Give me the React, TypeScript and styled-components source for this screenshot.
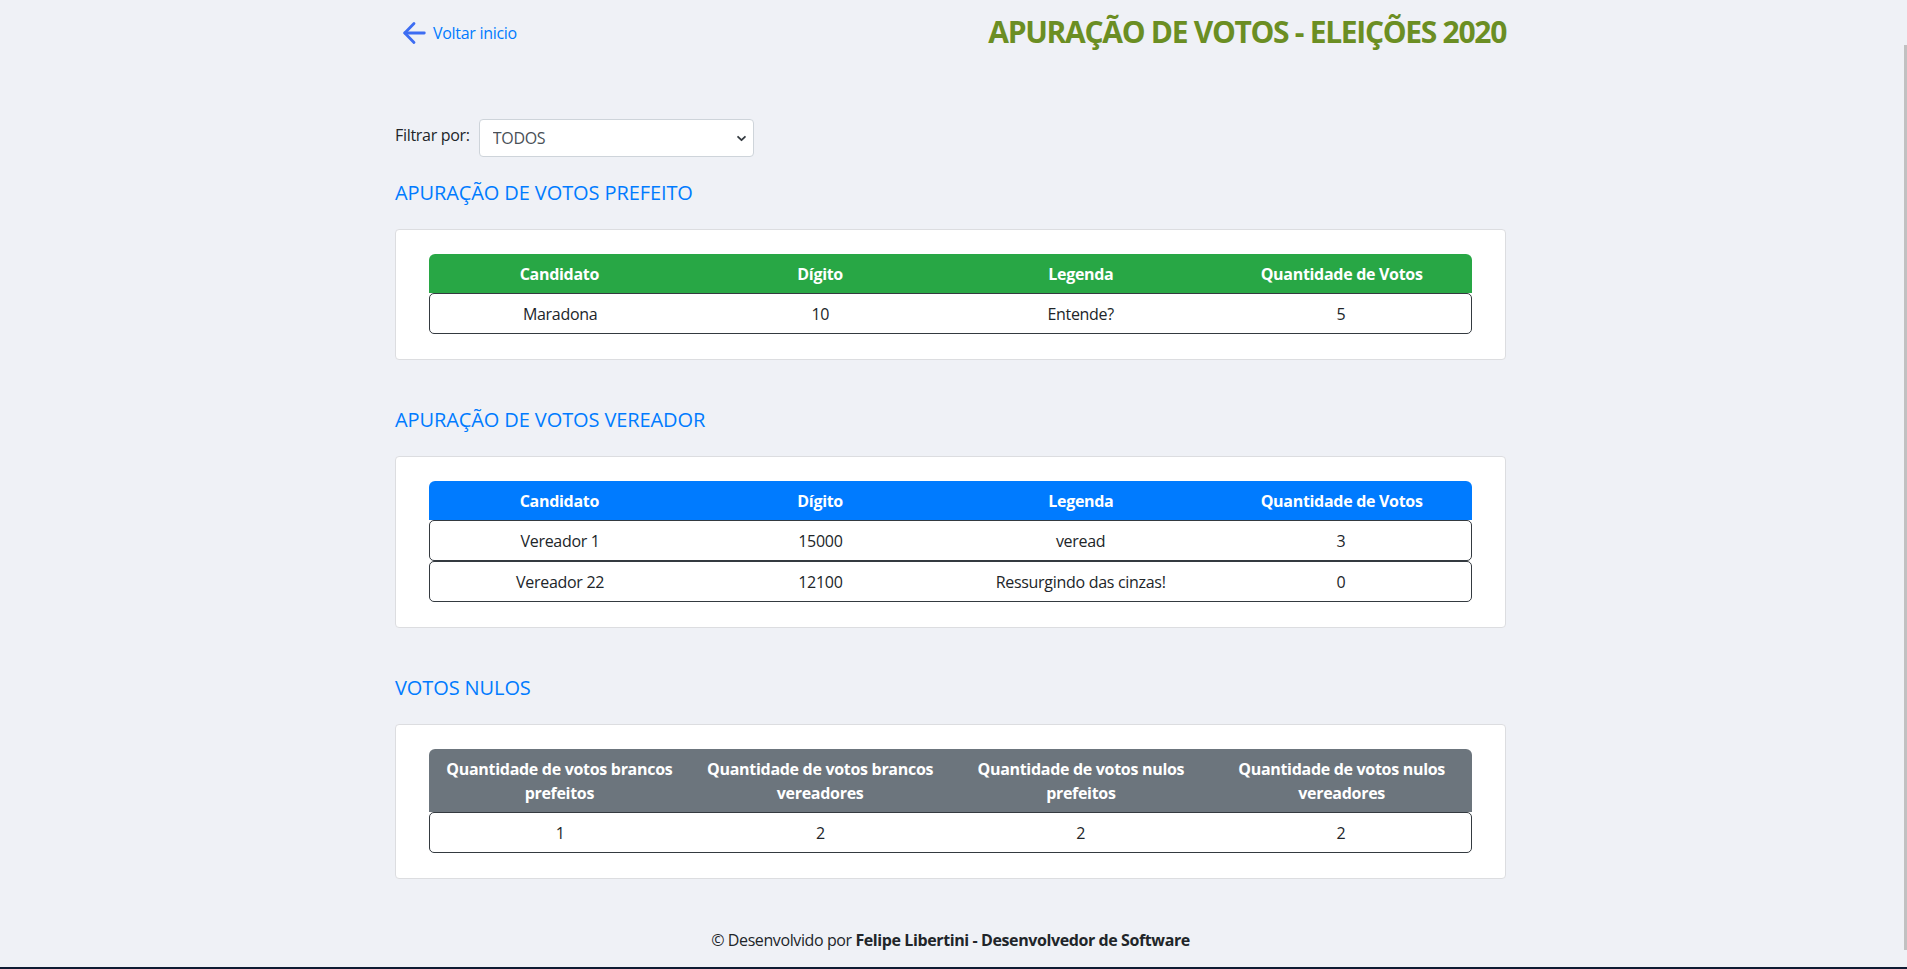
import React from "react";
import styled, { createGlobalStyle } from "styled-components";

const GlobalStyle = createGlobalStyle`
  html, body { margin: 0; padding: 0; }
  body {
    background: #eff1f6;
    font-family: "Open Sans", "Noto Sans", sans-serif;
    color: #212529;
    letter-spacing: -0.3px;
  }
  * { box-sizing: border-box; }
`;

const Shell = styled.div`
  display: flex;
  flex-direction: column;
  height: 100vh;
  overflow: hidden;
`;

const Body = styled.div`
  flex: 1;
  min-height: 0;
  display: flex;
`;

const Main = styled.main`
  flex: 1;
  padding-right: 3px;
`;

const ScrollTrack = styled.div`
  width: 3px;
  background: #c1c1c1;
  margin: 45px 0 17px;
`;

const TaskBar = styled.div`
  flex: none;
  height: 2px;
  background: #0f1b33;
`;

const Container = styled.div`
  width: 1111px;
  margin: 0 auto;
`;

const Header = styled.header`
  display: flex;
  justify-content: space-between;
  align-items: flex-start;
  padding-top: 14px;
`;

const BackLink = styled.a`
  display: inline-flex;
  align-items: center;
  gap: 6px;
  margin: 6px 0 0 6px;
  color: #007bff;
  font-size: 16px;
  line-height: 24px;
  text-decoration: none;
  cursor: pointer;
`;

const Title = styled.h2`
  margin: 0;
  font-size: 30px;
  line-height: 1.2;
  font-weight: 700;
  letter-spacing: -1.3px;
  color: #6b8e23;
`;

const FilterRow = styled.div`
  display: flex;
  align-items: flex-start;
  gap: 9px;
  margin-top: 68px;
`;

const FilterLabel = styled.label`
  font-size: 16px;
  line-height: 24px;
  padding-top: 5px;
  color: #212529;
`;

const SelectWrap = styled.div`
  position: relative;
  width: 275px;
  margin-top: 1px;
`;

const Select = styled.select`
  appearance: none;
  -webkit-appearance: none;
  width: 100%;
  height: 38px;
  padding: 0 30px 0 13px;
  border: 1px solid #ced4da;
  border-radius: 4px;
  background: #fff;
  color: #495057;
  font-family: inherit;
  font-size: 16px;
  letter-spacing: inherit;
`;

const Chevron = styled.svg`
  position: absolute;
  right: 7px;
  top: 14px;
  pointer-events: none;
`;

const Section = styled.section<{ $first?: boolean }>`
  margin-top: ${(p) => (p.$first ? "24px" : "48px")};
`;

const SectionTitle = styled.h5`
  margin: 0 0 24px;
  font-size: 20px;
  line-height: 24px;
  font-weight: 400;
  letter-spacing: -0.1px;
  color: #007bff;
`;

const Card = styled.div`
  background: #fff;
  border: 1px solid #dcdde0;
  border-radius: 4px;
  padding: 24px 33px 25px;
`;

const Table = styled.div`
  display: flex;
  flex-direction: column;
`;

const HeadRow = styled.div<{ $bg: string }>`
  display: grid;
  grid-template-columns: repeat(4, 1fr);
  background: ${(p) => p.$bg};
  color: #fff;
  font-weight: 700;
  border-radius: 6px 6px 0 0;
`;

const BodyRow = styled.div`
  display: grid;
  grid-template-columns: repeat(4, 1fr);
  border: 1px solid #343a40;
  border-radius: 5px;
  background: #fff;
`;

const Cell = styled.div`
  padding: 7.5px 10px;
  font-size: 16px;
  line-height: 24px;
  text-align: center;
`;

const Footer = styled.footer`
  margin-top: 49px;
  text-align: center;
  font-size: 16px;
  line-height: 24px;
  letter-spacing: -0.4px;
  color: #212529;
`;

const ArrowIcon = () => (
  <svg width="26" height="26" viewBox="0 0 24 24" fill="none" stroke="#3d6df2" strokeWidth="2.6" strokeLinecap="round" strokeLinejoin="round">
    <path d="M21.5 12H3.5" />
    <path d="M12 3.2L3.5 12l8.5 8.8" />
  </svg>
);

type Row = string[];

const DataTable = ({ bg, head, rows }: { bg: string; head: React.ReactNode[]; rows: Row[] }) => (
  <Table>
    <HeadRow $bg={bg}>
      {head.map((h, i) => (
        <Cell key={i}>{h}</Cell>
      ))}
    </HeadRow>
    {rows.map((r, i) => (
      <BodyRow key={i}>
        {r.map((c, j) => (
          <Cell key={j}>{c}</Cell>
        ))}
      </BodyRow>
    ))}
  </Table>
);

const candHead = ["Candidato", "Dígito", "Legenda", "Quantidade de Votos"];

export default function App() {
  return (
    <>
      <GlobalStyle />
      <Shell>
        <Body>
          <Main>
            <Container>
              <Header>
                <BackLink>
                  <ArrowIcon />
                  Voltar inicio
                </BackLink>
                <Title>APURAÇÃO DE VOTOS - ELEIÇÕES 2020</Title>
              </Header>

              <FilterRow>
                <FilterLabel htmlFor="filtro">Filtrar por:</FilterLabel>
                <SelectWrap>
                  <Select id="filtro" defaultValue="TODOS">
                    <option value="TODOS">TODOS</option>
                    <option value="PREFEITO">PREFEITO</option>
                    <option value="VEREADOR">VEREADOR</option>
                  </Select>
                  <Chevron width="11" height="11" viewBox="0 0 16 16" fill="none" stroke="#343a40" strokeWidth="2.6" strokeLinecap="round" strokeLinejoin="round">
                    <path d="M3 5.5l5 5 5-5" />
                  </Chevron>
                </SelectWrap>
              </FilterRow>

              <Section $first>
                <SectionTitle>APURAÇÃO DE VOTOS PREFEITO</SectionTitle>
                <Card>
                  <DataTable bg="#28a745" head={candHead} rows={[["Maradona", "10", "Entende?", "5"]]} />
                </Card>
              </Section>

              <Section>
                <SectionTitle>APURAÇÃO DE VOTOS VEREADOR</SectionTitle>
                <Card>
                  <DataTable
                    bg="#007bff"
                    head={candHead}
                    rows={[
                      ["Vereador 1", "15000", "veread", "3"],
                      ["Vereador 22", "12100", "Ressurgindo das cinzas!", "0"],
                    ]}
                  />
                </Card>
              </Section>

              <Section>
                <SectionTitle>VOTOS NULOS</SectionTitle>
                <Card>
                  <DataTable
                    bg="#6c757d"
                    head={[
                      "Quantidade de votos brancos prefeitos",
                      "Quantidade de votos brancos vereadores",
                      "Quantidade de votos nulos prefeitos",
                      "Quantidade de votos nulos vereadores",
                    ]}
                    rows={[["1", "2", "2", "2"]]}
                  />
                </Card>
              </Section>

              <Footer>
                © Desenvolvido por <b>Felipe Libertini - Desenvolvedor de Software</b>
              </Footer>
            </Container>
          </Main>
          <ScrollTrack />
        </Body>
        <TaskBar />
      </Shell>
    </>
  );
}
